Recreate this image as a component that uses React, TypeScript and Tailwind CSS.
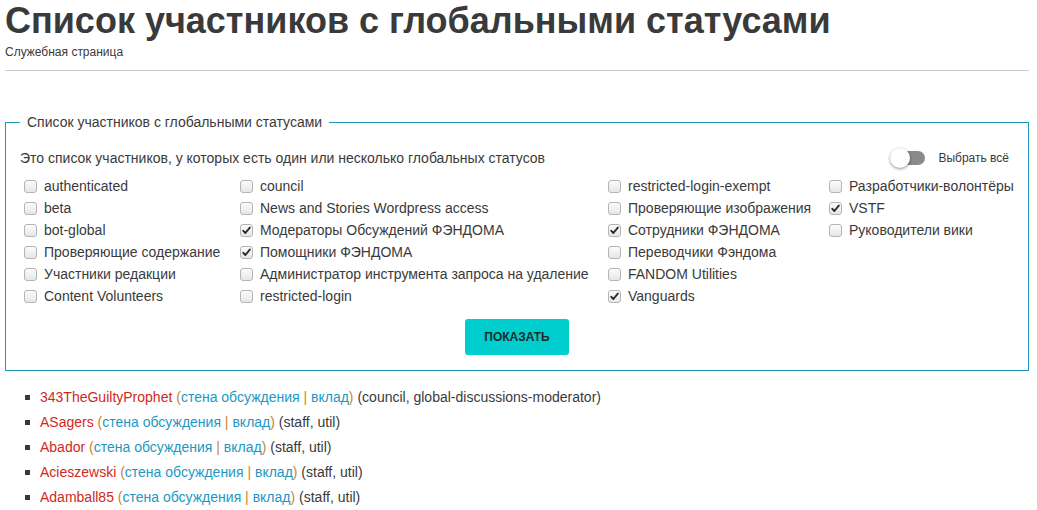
import React from "react";

type Item = { label: string; checked?: boolean };

const columns: Item[][] = [
  [
    { label: "authenticated" },
    { label: "beta" },
    { label: "bot-global" },
    { label: "Проверяющие содержание" },
    { label: "Участники редакции" },
    { label: "Content Volunteers" },
  ],
  [
    { label: "council" },
    { label: "News and Stories Wordpress access" },
    { label: "Модераторы Обсуждений ФЭНДОМА", checked: true },
    { label: "Помощники ФЭНДОМА", checked: true },
    { label: "Администратор инструмента запроса на удаление" },
    { label: "restricted-login" },
  ],
  [
    { label: "restricted-login-exempt" },
    { label: "Проверяющие изображения" },
    { label: "Сотрудники ФЭНДОМА", checked: true },
    { label: "Переводчики Фэндома" },
    { label: "FANDOM Utilities" },
    { label: "Vanguards", checked: true },
  ],
  [
    { label: "Разработчики-волонтёры" },
    { label: "VSTF", checked: true },
    { label: "Руководители вики" },
  ],
];

const users = [
  { name: "343TheGuiltyProphet", groups: "council, global-discussions-moderator" },
  { name: "ASagers", groups: "staff, util" },
  { name: "Abador", groups: "staff, util" },
  { name: "Acieszewski", groups: "staff, util" },
  { name: "Adamball85", groups: "staff, util" },
];

function Box({ checked }: { checked?: boolean }) {
  return (
    <span className="ml-1 mr-[7px] flex h-[13px] w-[13px] shrink-0 items-center justify-center rounded-[3px] border border-[#b4b4b4] bg-gradient-to-b from-[#fcfcfc] to-[#e6e6e6]">
      {checked && (
        <svg width="9" height="9" viewBox="0 0 9 9">
          <path d="M1.3 4.8 L3.4 7 L7.8 1.6" fill="none" stroke="#2a2a2a" strokeWidth="1.9" strokeLinecap="round" strokeLinejoin="round" />
        </svg>
      )}
    </span>
  );
}

export default function App() {
  return (
    <div className="min-h-[510px] bg-white pl-[5px] pr-[8px] text-[#3a3a3a]" style={{ fontFamily: '"Liberation Sans", Arial, sans-serif' }}>
      <h1 className="mt-[3px] text-[36px] font-bold leading-[36px] text-[#3a3a3a]">
        Список участников с глобальными статусами
      </h1>
      <div className="mt-[5px] text-[12px] leading-[16px]">Служебная страница</div>
      <div className="mt-[10px] h-px bg-[#cccccc]" />

      <fieldset className="mt-[41px] border border-[#1e98b6] px-[14px] pb-[15px]">
        <legend className="px-[7px] text-[14px] leading-[20px]">Список участников с глобальными статусами</legend>
        <div className="mt-4 flex h-[20px] items-center justify-between pr-[5px] text-[14px]">
          <span>Это список участников, у которых есть один или несколько глобальных статусов</span>
          <div className="flex items-center">
            <div className="relative h-[20px] w-[35px]">
              <div className="absolute left-[6px] top-[3px] h-[14px] w-[29px] rounded-full bg-[#878b89]" />
              <div className="absolute left-0 top-0 h-[20px] w-[20px] rounded-full bg-white shadow-[0_1px_3px_rgba(0,0,0,0.45)]" />
            </div>
            <span className="ml-[13px] text-[12px]">Выбрать всё</span>
          </div>
        </div>
        <div className="mt-[7px] grid grid-cols-[216px_368px_221px_1fr] text-[14px] leading-[22px]">
          {columns.map((col, ci) => (
            <div key={ci} className="flex flex-col">
              {col.map((it) => (
                <label key={it.label} className="flex h-[22px] items-center whitespace-nowrap">
                  <Box checked={it.checked} />
                  <span>{it.label}</span>
                </label>
              ))}
            </div>
          ))}
        </div>
        <div className="mt-[12px] flex justify-center">
          <button className="h-[36px] w-[104px] rounded-[3px] bg-[#00cece] text-[12px] font-bold text-[#1f2a2a]">
            ПОКАЗАТЬ
          </button>
        </div>
      </fieldset>

      <ul className="mt-[15px] flex flex-col gap-[3px] text-[14px] leading-[22px]">
        {users.map((u) => (
          <li key={u.name} className="flex items-center whitespace-nowrap">
            <span className="ml-[20px] mr-[10px] h-[5px] w-[5px] bg-[#3a3a3a]" />
            <span className="text-[#d2281c]">{u.name}</span>
            <span>&nbsp;</span>
            <span className="text-[#c9842e]">(</span>
            <span className="text-[#1d98c4]">стена обсуждения</span>
            <span className="text-[#c9842e]">&nbsp;|&nbsp;</span>
            <span className="text-[#1d98c4]">вклад</span>
            <span className="text-[#c9842e]">)</span>
            <span>&nbsp;({u.groups})</span>
          </li>
        ))}
      </ul>
    </div>
  );
}
